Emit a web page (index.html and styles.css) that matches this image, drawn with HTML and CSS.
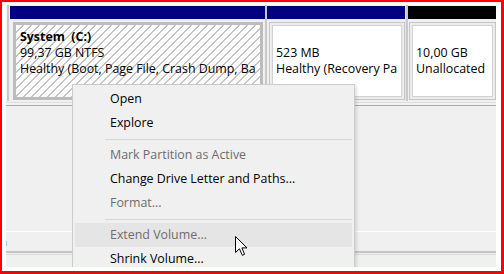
FILE: index.html
```html
<!DOCTYPE html>
<html>
<head>
<meta charset="utf-8">
<link rel="stylesheet" href="styles.css">
</head>
<body>
<div class="frame">
  <div class="view">
    <div class="disk">
      <div class="sep sep0"></div>
      <div class="part p1">
        <div class="hdr navy"></div>
        <div class="box sel">
          <div class="line bold">System&nbsp;&nbsp;(C:)</div>
          <div class="line">99,37 GB NTFS</div>
          <div class="line">Healthy (Boot, Page File, Crash Dump, Ba</div>
        </div>
      </div>
      <div class="sep sep1"></div>
      <div class="part p2">
        <div class="hdr navy"></div>
        <div class="box">
          <div class="line">&nbsp;</div>
          <div class="line">523 MB</div>
          <div class="line">Healthy (Recovery Pa</div>
        </div>
      </div>
      <div class="sep sep2"></div>
      <div class="part p3">
        <div class="hdr black"></div>
        <div class="box">
          <div class="line">&nbsp;</div>
          <div class="line">10,00 GB</div>
          <div class="line">Unallocated</div>
        </div>
      </div>
    </div>
    <div class="split"></div>
    <div class="lower">
      <div class="lower-top"></div>
      <div class="wline"></div>
      <div class="row2"><span class="iconbit"></span></div>
      <div class="gline"></div>
      <div class="glight"></div>
    </div>

    <div class="menu">
      <div class="item">Open</div>
      <div class="item">Explore</div>
      <div class="msep"></div>
      <div class="item dis">Mark Partition as Active</div>
      <div class="item">Change Drive Letter and Paths...</div>
      <div class="item dis">Format...</div>
      <div class="msep"></div>
      <div class="item dis hot">Extend Volume...</div>
      <div class="item">Shrink Volume...</div>
    </div>

    <svg class="cursor" width="14" height="21" viewBox="0 0 14 21">
      <polygon points="0.5,0.5 0.5,16.5 4.5,12.8 7.3,19.3 9.6,18.3 6.9,11.9 12,11.9" fill="#fff" stroke="#000" stroke-width="1" stroke-linejoin="miter"/>
    </svg>
  </div>
</div>
</body>
</html>
```

FILE: styles.css
```css
html, body {
  margin: 0;
  padding: 0;
}
body {
  width: 504px;
  height: 274px;
  overflow: hidden;
  background: #ffffff;
  font-family: "Open Sans", "Noto Sans", "Liberation Sans", sans-serif;
  font-size: 12.4px;
  color: #000;
}
.frame {
  box-sizing: border-box;
  width: 504px;
  height: 274px;
  border-style: solid;
  border-color: #ff0000;
  border-width: 2px 3px 3px 2px;
  padding: 3px 5px 4px 4px;
  background: #ffffff;
}
.view {
  position: relative;
  width: 490px;
  height: 262px;
  overflow: hidden;
  background: #f0f0f0;
  display: flex;
  flex-direction: column;
}
.disk {
  display: flex;
  flex: none;
  height: 96px;
  background: #f0f0f0;
}
.sep {
  flex: none;
}
.sep0 {
  width: 4px;
  background: linear-gradient(to right, #f4f4f4 0 1px, #c9c9c9 1px 3px, #eeeeee 3px);
}
.sep1 {
  width: 2px;
  background: #c9c9c9;
}
.sep2 {
  width: 3px;
  background: linear-gradient(to right, #e4e4e4 0 1px, #c9c9c9 1px 3px);
}
.part {
  flex: none;
  display: flex;
  flex-direction: column;
  padding-top: 1px;
}
.p1 { width: 255px; }
.p2 { width: 138px; }
.p3 { width: 88px; }
.hdr {
  height: 13px;
  flex: none;
}
.navy { background: #000080; }
.black { background: #000000; }
.box {
  flex: none;
  box-sizing: border-box;
  height: 78px;
  margin: 3px 0 0 2px;
  border: 1px solid #c6c6c6;
  box-shadow: inset 0 0 0 2px #ececec, inset 0 0 0 3px #d2d2d2;
  background: #ffffff;
  padding: 6px 0 0 6px;
  overflow: hidden;
  white-space: nowrap;
}
.p2 .box { margin-left: 2px; margin-right: 0; }
.p3 .box { margin-left: 1px; }
.box.sel {
  margin: 3px 2px 0 3px;
  border: 3px solid #bcbcbc;
  box-shadow: none;
  padding: 4px 0 0 4px;
  background: repeating-linear-gradient(135deg, #ffffff 0 4.7px, #c4c4c4 4.7px 5.66px);
}
.line {
  height: 16px;
  line-height: 16px;
  overflow: hidden;
}
.bold {
  font-weight: bold;
}
.split {
  flex: none;
  height: 4px;
  background: linear-gradient(#f0f0f0 0 1px, #dedede 1px 2px, #f2f2f2 2px);
  border-bottom: 1px solid #a9a9a9;
}
.lower {
  flex: 1;
  display: flex;
  flex-direction: column;
}
.lower-top {
  height: 125px;
  flex: none;
}
.wline {
  height: 1px;
  flex: none;
  background: #ffffff;
}
.row2 {
  height: 19px;
  flex: none;
  display: flex;
  align-items: flex-start;
  padding-top: 9px;
  box-sizing: border-box;
}
.iconbit {
  width: 1px;
  height: 5px;
  background: #7fd0f2;
}
.gline {
  height: 2px;
  flex: none;
  background: #c4c4c4;
}
.glight {
  height: 1px;
  flex: none;
  margin-top: 1px;
  background: #dadada;
}
.menu {
  position: absolute;
  left: 66px;
  top: 79px;
  width: 283px;
  box-sizing: border-box;
  border: 1px solid #cccccc;
  background: #f0f0f0;
  padding: 2px;
  box-shadow: 2px 2px 3px rgba(0, 0, 0, 0.12);
}
.item {
  height: 24px;
  line-height: 24px;
  padding-left: 35px;
  white-space: nowrap;
}
.item.dis {
  color: #6d6d6d;
}
.item.hot {
  background: #e5e5e5;
}
.msep {
  height: 8px;
  margin-left: 30px;
  background: linear-gradient(#d7d7d7, #d7d7d7) 0 4px / 100% 1px no-repeat;
}
.cursor {
  position: absolute;
  left: 229px;
  top: 231px;
}
```
